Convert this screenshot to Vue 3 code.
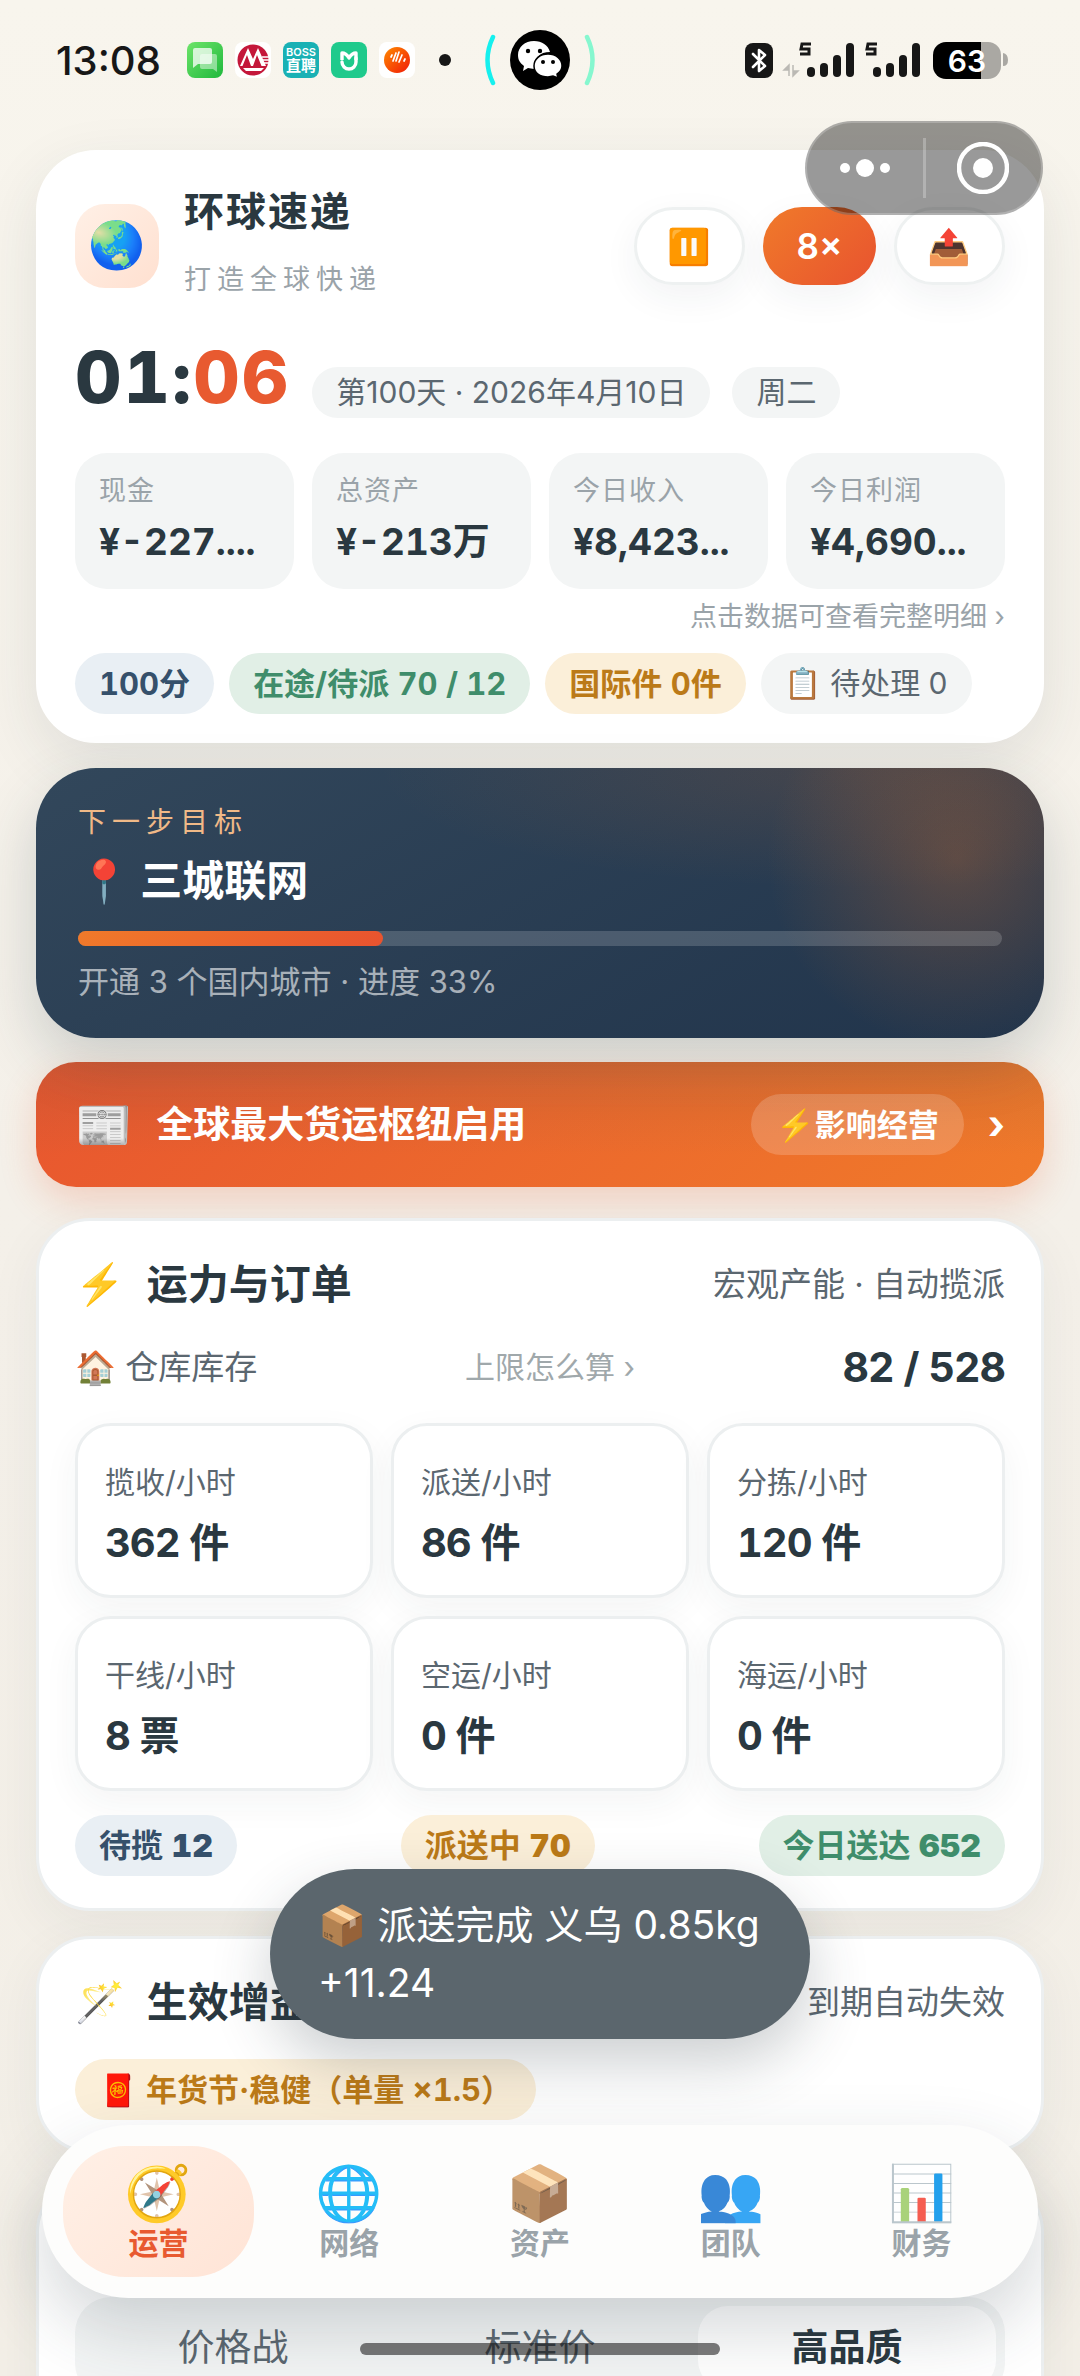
<script setup>
import { ref } from 'vue'

const metrics = [
  { label: '现金', value: '¥-227....' },
  { label: '总资产', value: '¥-213万' },
  { label: '今日收入', value: '¥8,423...' },
  { label: '今日利润', value: '¥4,690...' }
]
const capacity = [
  { label: '揽收/小时', value: '362 件' },
  { label: '派送/小时', value: '86 件' },
  { label: '分拣/小时', value: '120 件' },
  { label: '干线/小时', value: '8 票' },
  { label: '空运/小时', value: '0 件' },
  { label: '海运/小时', value: '0 件' }
]
const tabs = [
  { icon: '🧭', label: '运营' },
  { icon: '🌐', label: '网络' },
  { icon: '📦', label: '资产' },
  { icon: '👥', label: '团队' },
  { icon: '📊', label: '财务' }
]
const strategies = ['价格战', '标准价', '高品质']
const progress = 33
const activeTab = ref('运营')
const strategy = ref('高品质')
</script>

<template>
  <div class="screen">
    <header class="status">
      <span class="clock">13:08</span>
      <div class="apps">
        <svg viewBox="0 0 36 36">
          <defs>
            <linearGradient id="msg" x1="0" y1="0" x2="1" y2="1">
              <stop offset="0" stop-color="#6ee46a" />
              <stop offset="1" stop-color="#1fb83c" />
            </linearGradient>
          </defs>
          <rect width="36" height="36" rx="8" fill="url(#msg)" />
          <path d="M15 12h13q2 0 2 2v16l-4-3H15q-2 0-2-2V14q0-2 2-2z" fill="#fff" opacity=".45" />
          <path d="M8 6h15q2 0 2 2v12q0 2-2 2H11l-5 4V8q0-2 2-2z" fill="#fff" opacity=".75" />
        </svg>
        <svg viewBox="0 0 36 36">
          <rect width="36" height="36" rx="8" fill="#fff" />
          <circle cx="18" cy="18" r="15.5" fill="#c4173a" />
          <path d="M5 24 13 6l5 11 5-11 8 18h-4.500l-4.500-11-4 11h-2l-4-11-4.500 11zM8 26h21l-3 3H11z" fill="#fff" />
          <path d="M27 15h7M28 18h6M29 21h5" stroke="#fff" stroke-width="1.4" />
        </svg>
        <span class="boss"><b>BOSS</b><b>直聘</b></span>
        <svg viewBox="0 0 36 36">
          <rect width="36" height="36" rx="8" fill="#1fca8c" />
          <path d="M11 18v-7q4 0 7 5 3-5 7-5v7" fill="none" stroke="#fff" stroke-width="3.4" stroke-linejoin="round" />
          <path d="M11 20a7 7 0 0 0 14 0v-4" fill="none" stroke="#fff" stroke-width="3.4" stroke-linecap="round" />
        </svg>
        <svg viewBox="0 0 36 36">
          <defs>
            <linearGradient id="orb" x1="0" y1="0" x2="1" y2="1">
              <stop offset="0" stop-color="#ff8a00" />
              <stop offset="1" stop-color="#f01a08" />
            </linearGradient>
          </defs>
          <rect width="36" height="36" rx="8" fill="#fff" />
          <circle cx="18" cy="18" r="13" fill="url(#orb)" />
          <path d="m12 15 1-2m1 6 3-8m0 8 3-9m0 10 3-7m2 6 1-2" stroke="#fff" stroke-width="1.7" stroke-linecap="round" />
        </svg>
      </div>
      <i class="more-dot"></i>
      <svg class="island" viewBox="0 0 114 60">
        <path d="M10 7Q-1 30 10 53" fill="none" stroke="#16f0ee" stroke-width="4.500" stroke-linecap="round" />
        <path d="M104 7q11 23 0 46" fill="none" stroke="#86f7cf" stroke-width="4.500" stroke-linecap="round" />
        <circle cx="57" cy="30" r="30" fill="#000" />
        <path d="M51 11c-9 0-16 6-16 14 0 5 2 8 6 11l-1 5 5-3 6 1c-1-11 6-17 16-17-2-7-8-11-16-11z" fill="#fff" />
        <path d="M65 24c-8 0-14 5-14 12s6 11 14 11l5-1 5 2-1-4c3-2 5-5 5-8 0-7-6-12-14-12z" fill="#fff" stroke="#000" stroke-width="1.5" />
        <g fill="#000"><circle cx="45" cy="21" r="2.2" /><circle cx="57" cy="21" r="2.2" /><circle cx="60" cy="32" r="2" /><circle cx="70" cy="32" r="2" /></g>
      </svg>
      <svg class="radio" viewBox="0 0 264 38">
        <rect x="0" y="2" width="28" height="35" rx="8" fill="#171717" />
        <path d="m8 13 12 12-6 5V9l6 5L8 26" fill="none" stroke="#fff" stroke-width="2.6" stroke-linejoin="round" stroke-linecap="round" />
        <path d="M44 35V24l-5 5h5M48 24v11l5-5h-5" fill="#bbb9b4" stroke="#bbb9b4" stroke-width="1.5" />
        <g fill="none" stroke="#171717" stroke-width="3"><path d="M66 3h-9l-1 5h8v5h-9M132 3h-9l-1 5h8v5h-9" /></g>
        <g fill="#171717">
          <rect x="62" y="26" width="8" height="10" rx="4" /><rect x="75" y="22" width="8" height="14" rx="4" /><rect x="88" y="14" width="8" height="22" rx="4" /><rect x="101" y="2" width="8" height="34" rx="4" />
          <rect x="128" y="26" width="8" height="10" rx="4" /><rect x="141" y="22" width="8" height="14" rx="4" /><rect x="154" y="14" width="8" height="22" rx="4" /><rect x="167" y="2" width="8" height="34" rx="4" />
        </g>
        <path d="M258 12q5 1 5 7t-5 6z" fill="#aaa8a3" />
      </svg>
      <span class="battery">63</span>
    </header>

    <div class="capsule">
      <button type="button" aria-label="更多">
        <svg viewBox="0 0 52 20" width="52" height="20" fill="#fff"><circle cx="6" cy="10" r="5" /><circle cx="26" cy="10" r="9" /><circle cx="46" cy="10" r="5" /></svg>
      </button>
      <i></i>
      <button type="button" aria-label="关闭">
        <svg viewBox="0 0 52 52" width="52" height="52"><circle cx="26" cy="26" r="24" fill="none" stroke="#fff" stroke-width="4.500" /><circle cx="26" cy="26" r="10" fill="#fff" /></svg>
      </button>
    </div>

    <main class="page">
      <section class="hero">
        <div class="hero-top">
          <div class="logo">🌏</div>
          <div class="brand">
            <h1>环球速递</h1>
            <p>打造全球快递</p>
          </div>
          <div class="actions">
            <button type="button" aria-label="暂停">⏸️</button>
            <button type="button" class="speed">8×</button>
            <button type="button" aria-label="导出">📤</button>
          </div>
        </div>
        <div class="time-row">
          <div class="time">01:<span>06</span></div>
          <span class="date">第100天 · 2026年4月10日</span>
          <span class="date">周二</span>
        </div>
        <div class="metrics">
          <div v-for="m in metrics" :key="m.label" class="metric">
            <p>{{ m.label }}</p>
            <strong>{{ m.value }}</strong>
          </div>
        </div>
        <a class="hint" href="#">点击数据可查看完整明细 ›</a>
        <div class="chips">
          <span class="chip blue">100分</span>
          <span class="chip green">在途/待派 70 / 12</span>
          <span class="chip amber">国际件 0件</span>
          <span class="chip plain">📋 待处理 0</span>
        </div>
      </section>

      <section class="goal">
        <p class="goal-label">下一步目标</p>
        <h2>📍 三城联网</h2>
        <div class="track" role="progressbar" :aria-valuenow="progress" aria-valuemin="0" aria-valuemax="100">
          <div class="fill" :style="{ width: progress + '%' }"></div>
        </div>
        <p class="goal-text">开通 3 个国内城市 · 进度 {{ progress }}%</p>
      </section>

      <button type="button" class="news">
        <span class="news-icon">📰</span>
        <span class="news-title">全球最大货运枢纽启用</span>
        <span class="news-badge">⚡影响经营</span>
        <span class="news-arrow">›</span>
      </button>

      <section class="card capacity">
        <div class="card-head">
          <span class="card-icon">⚡</span>
          <h2>运力与订单</h2>
          <span class="card-sub">宏观产能 · 自动揽派</span>
        </div>
        <div class="stock">
          <span>🏠 仓库库存</span>
          <a href="#">上限怎么算 ›</a>
          <strong>82 / 528</strong>
        </div>
        <div class="cells">
          <div v-for="c in capacity" :key="c.label" class="cell">
            <p>{{ c.label }}</p>
            <strong>{{ c.value }}</strong>
          </div>
        </div>
        <div class="totals">
          <span class="chip blue">待揽 <b>12</b></span>
          <span class="chip amber">派送中 <b>70</b></span>
          <span class="chip green">今日送达 <b>652</b></span>
        </div>
      </section>

      <section class="card buffs">
        <div class="card-head">
          <span class="card-icon">🪄</span>
          <h2>生效增益</h2>
          <span class="card-sub">到期自动失效</span>
        </div>
        <div class="chips">
          <span class="chip amber">🧧 年货节·稳健（单量 ×1.5）</span>
        </div>
      </section>

      <section class="card pricing">
        <div class="segments">
          <button
            v-for="s in strategies"
            :key="s"
            type="button"
            :class="{ on: s === strategy }"
            @click="strategy = s"
          >{{ s }}</button>
        </div>
      </section>
    </main>

    <div class="toast" role="status">📦 派送完成 义乌 0.85kg<br />+11.24</div>

    <nav class="tabbar">
      <button
        v-for="t in tabs"
        :key="t.label"
        type="button"
        :class="{ on: t.label === activeTab }"
        @click="activeTab = t.label"
      >
        <span class="tab-icon">{{ t.icon }}</span>
        <span class="tab-label">{{ t.label }}</span>
      </button>
    </nav>
    <i class="home-bar"></i>
  </div>
</template>

<style>
body {
  margin: 0;
}
</style>

<style scoped>
.screen {
  position: relative;
  height: 100vh;
  overflow: hidden;
  box-sizing: border-box;
  background: linear-gradient(180deg, #f8f5ed 0%, #f4f0e9 50%, #f3efe7 100%);
  color: #2a3840;
  font-family: Inter, "Noto Sans CJK SC", "Noto Color Emoji", sans-serif;
}
h1, h2, p {
  margin: 0;
}
button {
  margin: 0;
  padding: 0;
  border: 0;
  background: none;
  color: inherit;
  font: inherit;
  cursor: pointer;
}
a {
  color: inherit;
  text-decoration: none;
}

.status {
  display: flex;
  align-items: center;
  height: 120px;
  padding: 0 79px 0 56px;
  color: #171717;
}
.clock {
  width: 131px;
  font-size: 40px;
  font-weight: 500;
}
.apps {
  display: flex;
  gap: 12px;
}
.apps > * {
  width: 36px;
  height: 36px;
}
.boss {
  display: flex;
  flex-direction: column;
  align-items: center;
  justify-content: center;
  border-radius: 8px;
  background: #19b1b4;
  color: #fff;
}
.boss b {
  font-size: 11px;
  font-weight: 600;
  line-height: 12px;
}
.boss b + b {
  font-size: 15px;
  font-weight: 700;
  line-height: 16px;
}
.more-dot {
  width: 12px;
  height: 12px;
  margin-left: 24px;
  border-radius: 50%;
  background: #171717;
}
.island {
  width: 114px;
  height: 60px;
  margin-left: 32px;
}
.radio {
  width: 264px;
  height: 38px;
  margin-left: auto;
  margin-right: -76px;
}
.battery {
  width: 68px;
  height: 37px;
  border-radius: 13px;
  background: linear-gradient(90deg, #000 70%, #aaa8a3 70%);
  color: #fff;
  font-size: 30px;
  font-weight: 600;
  line-height: 38px;
  text-align: center;
}

.capsule {
  position: absolute;
  z-index: 5;
  top: 121px;
  right: 37px;
  display: flex;
  align-items: center;
  width: 238px;
  height: 94px;
  box-sizing: border-box;
  border: 2px solid rgba(255, 255, 255, .22);
  border-radius: 47px;
  background: rgba(0, 0, 0, .4);
}
.capsule button {
  flex: 1;
  display: flex;
  justify-content: center;
}
.capsule i {
  width: 3px;
  height: 60px;
  background: rgba(255, 255, 255, .25);
}

.page {
  display: flex;
  flex-direction: column;
  padding: 30px 36px 0;
}
.hero {
  padding: 36px 39px 29px;
  border-radius: 60px;
  background: #fff;
  box-shadow: 0 20px 60px rgba(42, 56, 64, .1);
}
.hero-top {
  display: flex;
  align-items: center;
}
.logo {
  width: 84px;
  height: 84px;
  border-radius: 30px;
  background: linear-gradient(135deg, #fff0e6, #ffe0d0);
  font-size: 46px;
  line-height: 80px;
  text-align: center;
}
.brand {
  margin-left: 25px;
}
.brand h1 {
  font-size: 40px;
  line-height: 52px;
  letter-spacing: 2px;
}
.brand p {
  margin-top: 16px;
  color: #9aa3a9;
  font-size: 27px;
  line-height: 52px;
  letter-spacing: 6px;
}
.actions {
  display: flex;
  gap: 18px;
  margin-left: auto;
}
.actions button {
  width: 111px;
  height: 78px;
  box-sizing: border-box;
  border: 3px solid #eef1f1;
  border-radius: 39px;
  background: #fff;
  box-shadow: 0 12px 36px rgba(42, 56, 64, .06);
  font-size: 35px;
  line-height: 68px;
}
.actions .speed {
  width: 113px;
  border: 0;
  background: linear-gradient(135deg, #f07a2a, #e8532f);
  color: #fff;
  font-weight: 600;
}
.time-row {
  display: flex;
  align-items: baseline;
  margin-top: 35px;
}
.time {
  font-size: 72px;
  font-weight: 800;
  line-height: 72px;
  font-variant-numeric: tabular-nums;
  letter-spacing: 2px;
}
.time span {
  color: #e85a30;
}
.date {
  margin-left: 22px;
  padding: 0 24px;
  border-radius: 26px;
  background: #f3f5f5;
  color: #5b6770;
  font-size: 30px;
  line-height: 51px;
}
.metrics {
  display: grid;
  grid-template-columns: repeat(4, 1fr);
  gap: 18px;
  margin-top: 35px;
}
.metric {
  min-width: 0;
  padding: 21px 24px 23px;
  border-radius: 32px;
  background: #f3f5f5;
}
.metric p {
  color: #9aa3a9;
  font-size: 27px;
  line-height: 34px;
  letter-spacing: 1px;
}
.metric strong {
  display: block;
  margin-top: 10px;
  font-size: 37px;
  line-height: 48px;
  white-space: nowrap;
  font-variant-numeric: tabular-nums;
}
.hint {
  display: block;
  margin-top: 10px;
  color: #9aa3a9;
  font-size: 27px;
  line-height: 36px;
  text-align: right;
}
.chips {
  display: flex;
  gap: 15px;
  margin-top: 18px;
}
.chip {
  padding: 0 24px;
  border-radius: 31px;
  font-size: 31px;
  font-weight: 700;
  line-height: 61px;
  white-space: nowrap;
  font-variant-numeric: tabular-nums;
}
.chip b {
  font-weight: 900;
}
.blue {
  background: #e9eff4;
  color: #35506b;
}
.green {
  background: #e1efe6;
  color: #3f8d6b;
}
.amber {
  background: #fbefd9;
  color: #bb7a18;
}
.plain {
  background: #f3f5f5;
  color: #5b6770;
  font-size: 30px;
  font-weight: 400;
}

.goal {
  position: relative;
  z-index: 1;
  margin-top: 25px;
  padding: 36px 42px;
  border-radius: 60px;
  background:
    radial-gradient(circle 190px at 921px 90px, rgba(240, 122, 42, .26), transparent),
    radial-gradient(ellipse 480px 120px at 820px 0, rgba(240, 122, 42, .14), transparent),
    linear-gradient(150deg, #32475b, #21344b);
  box-shadow: 0 24px 60px rgba(42, 66, 74, .2);
  color: #fff;
}
.goal-label {
  color: #f0b987;
  font-size: 28px;
  line-height: 36px;
  letter-spacing: 6px;
}
.goal h2 {
  margin-top: 15px;
  font-size: 42px;
  line-height: 52px;
}
.track {
  height: 15px;
  margin-top: 24px;
  border-radius: 8px;
  background: rgba(255, 255, 255, .17);
}
.fill {
  height: 100%;
  border-radius: 8px;
  background: linear-gradient(135deg, #f07a2a, #e8532f);
}
.goal-text {
  margin-top: 16px;
  color: rgba(255, 255, 255, .6);
  font-size: 31px;
  line-height: 40px;
}

.news {
  display: flex;
  align-items: center;
  margin-top: 24px;
  padding: 32px 39px;
  border-radius: 40px;
  background:
    linear-gradient(180deg, rgba(60, 90, 80, .12), rgba(60, 90, 80, 0) 75%),
    linear-gradient(135deg, #e8562f, #f07a2a);
  box-shadow: 0 14px 36px rgba(232, 90, 48, .22);
  color: #fff;
  font-weight: 700;
}
.news-icon {
  font-size: 46px;
  line-height: 61px;
}
.news-title {
  margin-left: 24px;
  font-size: 37px;
  line-height: 61px;
}
.news-badge {
  margin-left: auto;
  padding: 0 25px;
  border-radius: 31px;
  background: rgba(255, 255, 255, .18);
  font-size: 31px;
  line-height: 61px;
}
.news-arrow {
  margin-left: 24px;
  font-size: 40px;
  line-height: 61px;
}

.card {
  margin-top: 25px;
  border: 3px solid #eceff0;
  border-radius: 54px;
  background: #fff;
  padding: 39px 36px 32px;
  box-shadow: 0 16px 54px rgba(42, 56, 64, .06);
}
.capacity {
  margin-top: 31px;
}
.card-head {
  display: flex;
  align-items: center;
  line-height: 48px;
}
.card-icon {
  font-size: 40px;
}
.card-head h2 {
  margin-left: 22px;
  font-size: 41px;
}
.card-sub {
  margin-left: auto;
  color: #5b6770;
  font-size: 33px;
}
.stock {
  display: flex;
  align-items: center;
  justify-content: space-between;
  margin-top: 35px;
  color: #5b6770;
  font-size: 33px;
  line-height: 48px;
}
.stock a {
  color: #a0a8ab;
  font-size: 30px;
}
.stock strong {
  color: #2a3840;
  font-size: 41px;
  font-variant-numeric: tabular-nums;
  letter-spacing: -1px;
}
.cells {
  display: grid;
  grid-template-columns: repeat(3, 1fr);
  gap: 18px;
  margin-top: 32px;
}
.cell {
  padding: 36px 27px 28px;
  border: 3px solid #eceff0;
  border-radius: 36px;
  background: #fff;
  box-shadow: 0 12px 36px rgba(42, 56, 64, .05);
}
.cell p {
  color: #5b6770;
  font-size: 30px;
  line-height: 40px;
}
.cell strong {
  display: block;
  margin-top: 17px;
  font-size: 40px;
  line-height: 48px;
  font-variant-numeric: tabular-nums;
  letter-spacing: -1px;
}
.totals {
  display: flex;
  justify-content: space-between;
  margin-top: 24px;
}
.totals .chip {
  font-size: 32px;
}
.buffs {
  padding-bottom: 30px;
}
.buffs .chips {
  margin-top: 33px;
}
.pricing {
  padding-top: 116px;
}
.segments {
  display: grid;
  grid-template-columns: repeat(3, 1fr);
  gap: 9px;
  padding: 9px;
  border-radius: 36px;
  background: #f3f5f5;
  color: #5b6770;
  font-size: 37px;
  line-height: 84px;
}
.segments .on {
  border-radius: 30px;
  background: #fff;
  color: #2a3840;
  font-weight: 700;
}

.toast {
  position: absolute;
  z-index: 6;
  top: 1869px;
  left: 50%;
  transform: translateX(-50%);
  width: 444px;
  padding: 27px 48px;
  border-radius: 86px;
  background: #5b666d;
  box-shadow: 0 24px 60px rgba(42, 56, 64, .24);
  color: #fff;
  font-size: 39px;
  line-height: 58px;
  white-space: nowrap;
}
.tabbar {
  position: absolute;
  z-index: 4;
  right: 42px;
  bottom: 78px;
  left: 42px;
  display: flex;
  padding: 21px;
  border-radius: 87px;
  background: #fdfdfc;
  box-shadow: 0 30px 72px rgba(42, 56, 64, .2);
}
.tabbar button {
  flex: 1;
  display: flex;
  flex-direction: column;
  align-items: center;
  height: 131px;
  padding-top: 15px;
  box-sizing: border-box;
  border-radius: 62px;
  color: #9aa3a9;
}
.tabbar .on {
  background: linear-gradient(135deg, #fff0e6, #ffe4d6);
  color: #e85a30;
}
.tab-icon {
  font-size: 54px;
  line-height: 64px;
  opacity: .86;
}
.on .tab-icon {
  opacity: 1;
}
.tab-label {
  font-size: 30px;
  font-weight: 700;
  line-height: 36px;
}
.home-bar {
  position: absolute;
  z-index: 7;
  bottom: 21px;
  left: 50%;
  width: 360px;
  height: 12px;
  transform: translateX(-50%);
  border-radius: 6px;
  background: rgba(20, 20, 20, .56);
}
</style>
